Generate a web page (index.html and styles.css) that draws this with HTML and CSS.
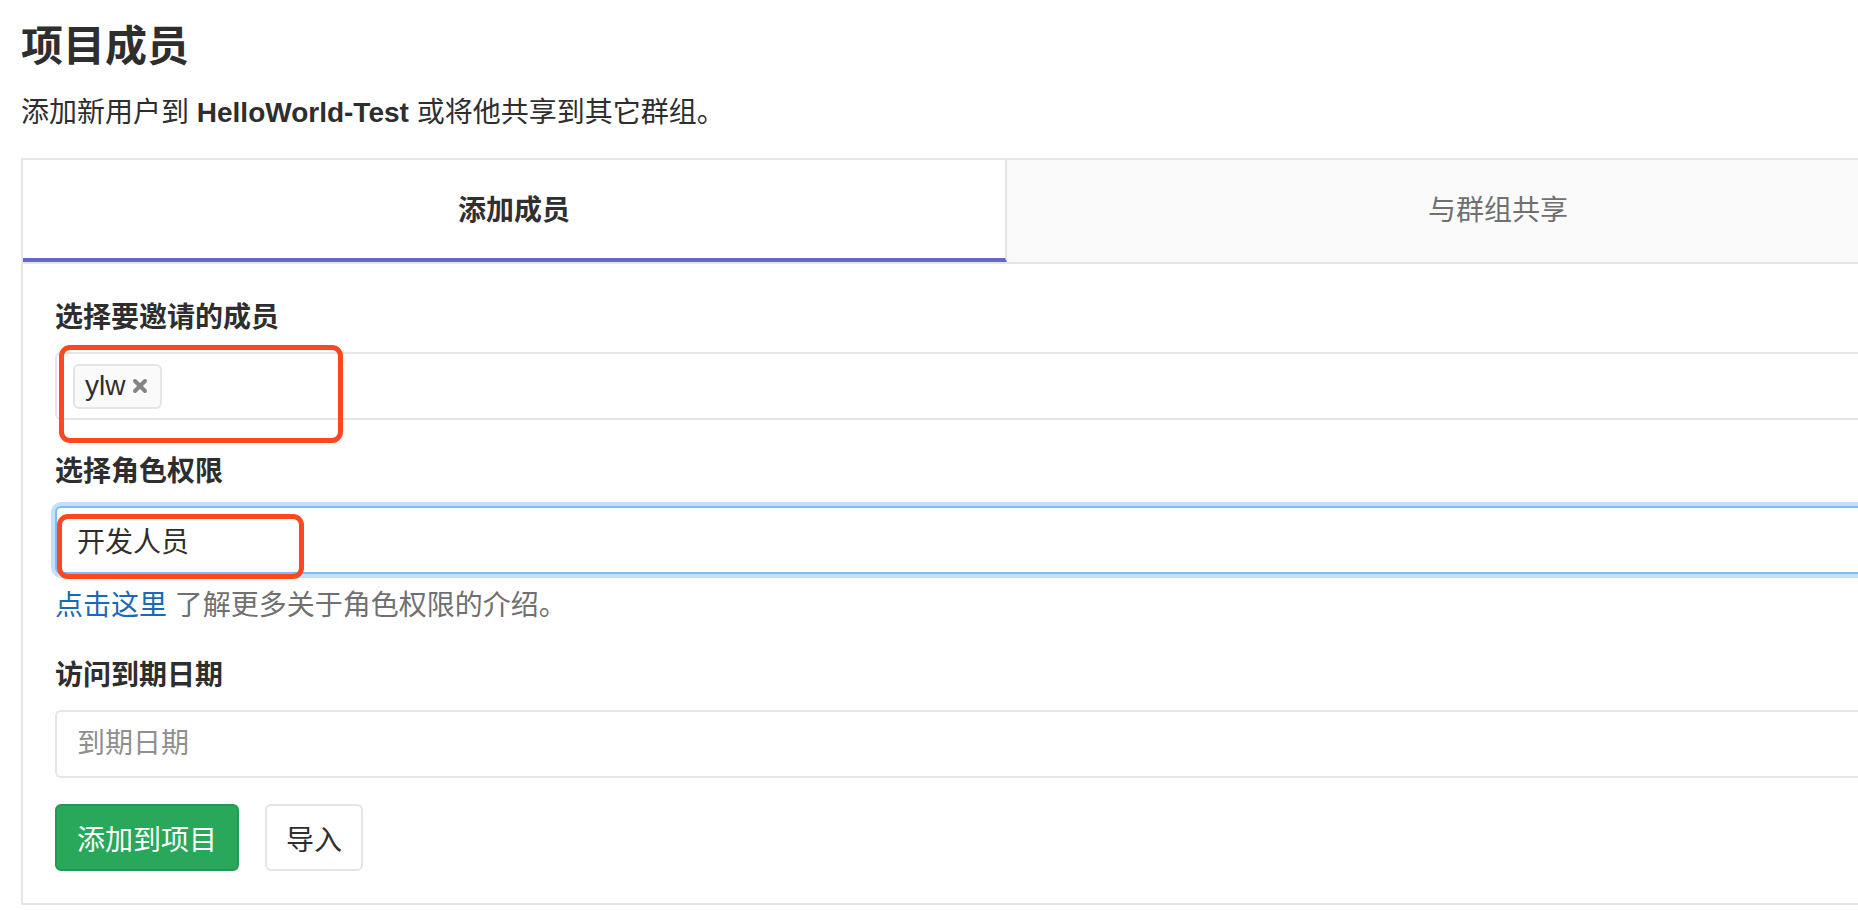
FILE: index.html
```html
<!DOCTYPE html>
<html lang="zh-CN">
<head>
    <meta charset="UTF-8">
    <meta name="viewport" content="width=device-width, initial-scale=1.0">
    <title>项目成员</title>
    <link rel="stylesheet" href="styles.css">
</head>
<body>
    <div class="page">
        <h1 class="page-title">项目成员</h1>
        <p class="page-lead">添加新用户到 <strong>HelloWorld-Test</strong> 或将他共享到其它群组。</p>

        <div class="card">
            <div class="tabs">
                <div class="tab active">添加成员</div>
                <div class="tab">与群组共享</div>
            </div>

            <form class="card-body">
                <div class="form-group">
                    <label class="label">选择要邀请的成员</label>
                    <div class="field field-tokens">
                        <span class="token">ylw
                            <svg class="token-remove" width="16" height="16" viewBox="0 0 16 16">
                                <path d="M3 3 L13 13 M13 3 L3 13" stroke="#858585" stroke-width="4" stroke-linecap="round"/>
                            </svg>
                        </span>
                        <div class="mark mark-members"></div>
                    </div>
                </div>

                <div class="form-group">
                    <label class="label">选择角色权限</label>
                    <div class="field field-focus">
                        开发人员
                        <div class="mark mark-role"></div>
                    </div>
                    <p class="help"><a href="#" class="link">点击这里</a> 了解更多关于角色权限的介绍。</p>
                </div>

                <div class="form-group">
                    <label class="label">访问到期日期</label>
                    <input type="text" class="field" placeholder="到期日期">
                </div>

                <div class="actions">
                    <button type="button" class="btn btn-success">添加到项目</button>
                    <button type="button" class="btn btn-default">导入</button>
                </div>
            </form>
        </div>
    </div>
</body>
</html>
```

FILE: styles.css
```css
html, body {
    margin: 0;
    overflow: hidden;
}
body {
    font-family: "Liberation Sans", "Noto Sans CJK SC", sans-serif;
    font-size: 28px;
    color: #2e2e2e;
    background: #fff;
}
.page {
    padding: 20px 0 0 21px;
}
.page-title {
    margin: 0;
    font-size: 42px;
    line-height: 54px;
    font-weight: bold;
}
.page-lead {
    margin: 19px 0 25px;
    line-height: 40px;
}
.card {
    width: 1970px;
    border: 2px solid #e5e5e5;
    box-sizing: border-box;
}
.tabs {
    display: flex;
    border-bottom: 2px solid #e5e5e5;
}
.tab {
    flex: 1;
    height: 102px;
    display: flex;
    align-items: center;
    justify-content: center;
    background: #fafafa;
    color: #707070;
    box-sizing: border-box;
    padding-bottom: 6px;
}
.tab.active {
    background: #fff;
    color: #303030;
    font-weight: bold;
    border-right: 2px solid #e5e5e5;
    border-bottom: 4px solid #6666c4;
    padding-bottom: 2px;
}
.card-body {
    padding: 36px 32px 32px;
    margin: 0;
}
.form-group {
    margin-bottom: 34px;
}
.label {
    display: block;
    font-weight: bold;
    line-height: 36px;
    margin-bottom: 16px;
}
.field {
    position: relative;
    display: flex;
    align-items: center;
    width: 100%;
    height: 68px;
    box-sizing: border-box;
    border: 2px solid #e5e5e5;
    border-radius: 6px;
    padding: 0 20px;
    font: inherit;
    color: #2e2e2e;
    background: #fff;
    outline: none;
}
.field::placeholder {
    color: #8f8f8f;
}
.field-tokens {
    padding: 0 16px;
}
.field-focus {
    border-color: #80bbf5;
    box-shadow: 0 0 0 4px #c6e0fb;
}
.token {
    display: inline-flex;
    align-items: center;
    gap: 7px;
    height: 45px;
    box-sizing: border-box;
    padding: 0 12px 0 10px;
    background: #fafafa;
    border: 2px solid #e5e5e5;
    border-radius: 6px;
    line-height: 1;
}
.help {
    margin: 14px 0 0;
    line-height: 36px;
    color: #707070;
}
.link {
    color: #1b69b6;
    text-decoration: none;
}
.actions {
    display: flex;
    gap: 26px;
    margin-top: -8px;
}
.btn {
    height: 67px;
    padding: 0 20px;
    font: inherit;
    border-radius: 6px;
    box-sizing: border-box;
}
.btn-success {
    background: #29a85b;
    border: 2px solid #21994f;
    color: #fff;
}
.btn-default {
    background: #fff;
    border: 2px solid #e5e5e5;
    color: #2e2e2e;
    padding: 0 19px;
}
/* 红色标注框 */
.mark {
    position: absolute;
    border: 5px solid #fc4722;
    border-radius: 11px;
    box-sizing: border-box;
}
.mark-members {
    left: 2px;
    top: -9px;
    width: 284px;
    height: 98px;
}
.mark-role {
    left: 0;
    top: 6px;
    width: 247px;
    height: 65px;
}
```
